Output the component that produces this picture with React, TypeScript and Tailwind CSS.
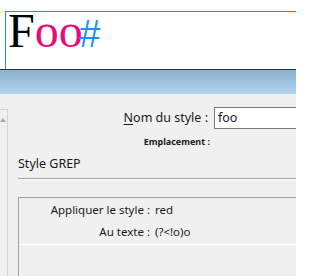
// Aperçu d'un style GREP : rendu en haut, panneau de réglages en dessous
const UI = "font-['Noto_Sans',sans-serif] text-[#1a1a1a]";

function Apercu() {
  return (
    <div className="h-[69px] bg-white pl-[5px] pt-[11px] flex">
      <div className="flex-1 border-l border-t border-[#1e8fe1] pl-[2px] whitespace-nowrap">
        <span className="font-['Liberation_Serif',serif] text-[48px] leading-[38px] text-black">F</span>
        <span className="font-['Liberation_Serif',serif] text-[48px] leading-[38px] text-[#ea0a7e]">oo</span>
        <span className="-ml-[4px] font-['Liberation_Sans',sans-serif] italic text-[38px] leading-[38px] text-[#1e90ff]">#</span>
      </div>
    </div>
  );
}

function Ligne({ label, valeur }: { label: string; valeur: string }) {
  return (
    <div className="flex items-center h-[22px] text-[11.5px]">
      <span className="w-[131px] shrink-0 text-right">{label} :</span>
      <span className="ml-[5px] whitespace-nowrap">{valeur}</span>
    </div>
  );
}

export default function App() {
  return (
    <div className="w-[296px] h-[276px] overflow-hidden flex flex-col bg-[#f0f0f0]">
      <Apercu />
      <div className="h-px bg-[#333333]" />
      <div className="h-[24px] bg-gradient-to-b from-[#8ab1d1] to-[#b3d4ee]" />

      <div className={`flex-1 flex ${UI}`}>
        {/* Panneau de gauche (liste) */}
        <div className="w-[8px] shrink-0 mt-[15px] border-t border-r border-[#d4d4d4] relative">
          <div className="absolute left-0 top-[8px] w-0 h-0 border-l-[3px] border-r-[3px] border-b-[4px] border-l-transparent border-r-transparent border-b-[#a8a8a8]" />
        </div>

        <div className="flex-1 min-w-0 overflow-hidden pl-[10px] flex flex-col">
          {/* Nom du style */}
          <div className="flex items-center mt-[13px] text-[12.5px]">
            <span className="w-[190px] shrink-0 text-right">
              <span className="underline underline-offset-2">N</span>om du style :
            </span>
            <div className="ml-[6px] h-[22px] w-[100px] shrink-0 border border-[#7a7a7a] bg-white pl-[3px] leading-[20px]">
              foo
            </div>
          </div>

          <div className="mt-[7px] w-[192px] text-right text-[9px] font-bold leading-[12px]">
            Emplacement :
          </div>

          <div className="mt-[8px] text-[12.5px] leading-[16px]">Style GREP</div>

          <div className="mt-[6px] h-px bg-[#a0a0a0]" />
          <div className="h-px bg-white" />

          {/* Détails du style GREP */}
          <div className="mt-[17px] flex-1 border-l border-t border-[#a0a0a0]">
            <div className="pt-[1px]">
              <Ligne label="Appliquer le style" valeur="red" />
              <Ligne label="Au texte" valeur="(?<!o)o" />
            </div>
            <div className="mt-[1px] ml-[1px] h-px bg-white" />
          </div>
        </div>
      </div>
    </div>
  );
}
